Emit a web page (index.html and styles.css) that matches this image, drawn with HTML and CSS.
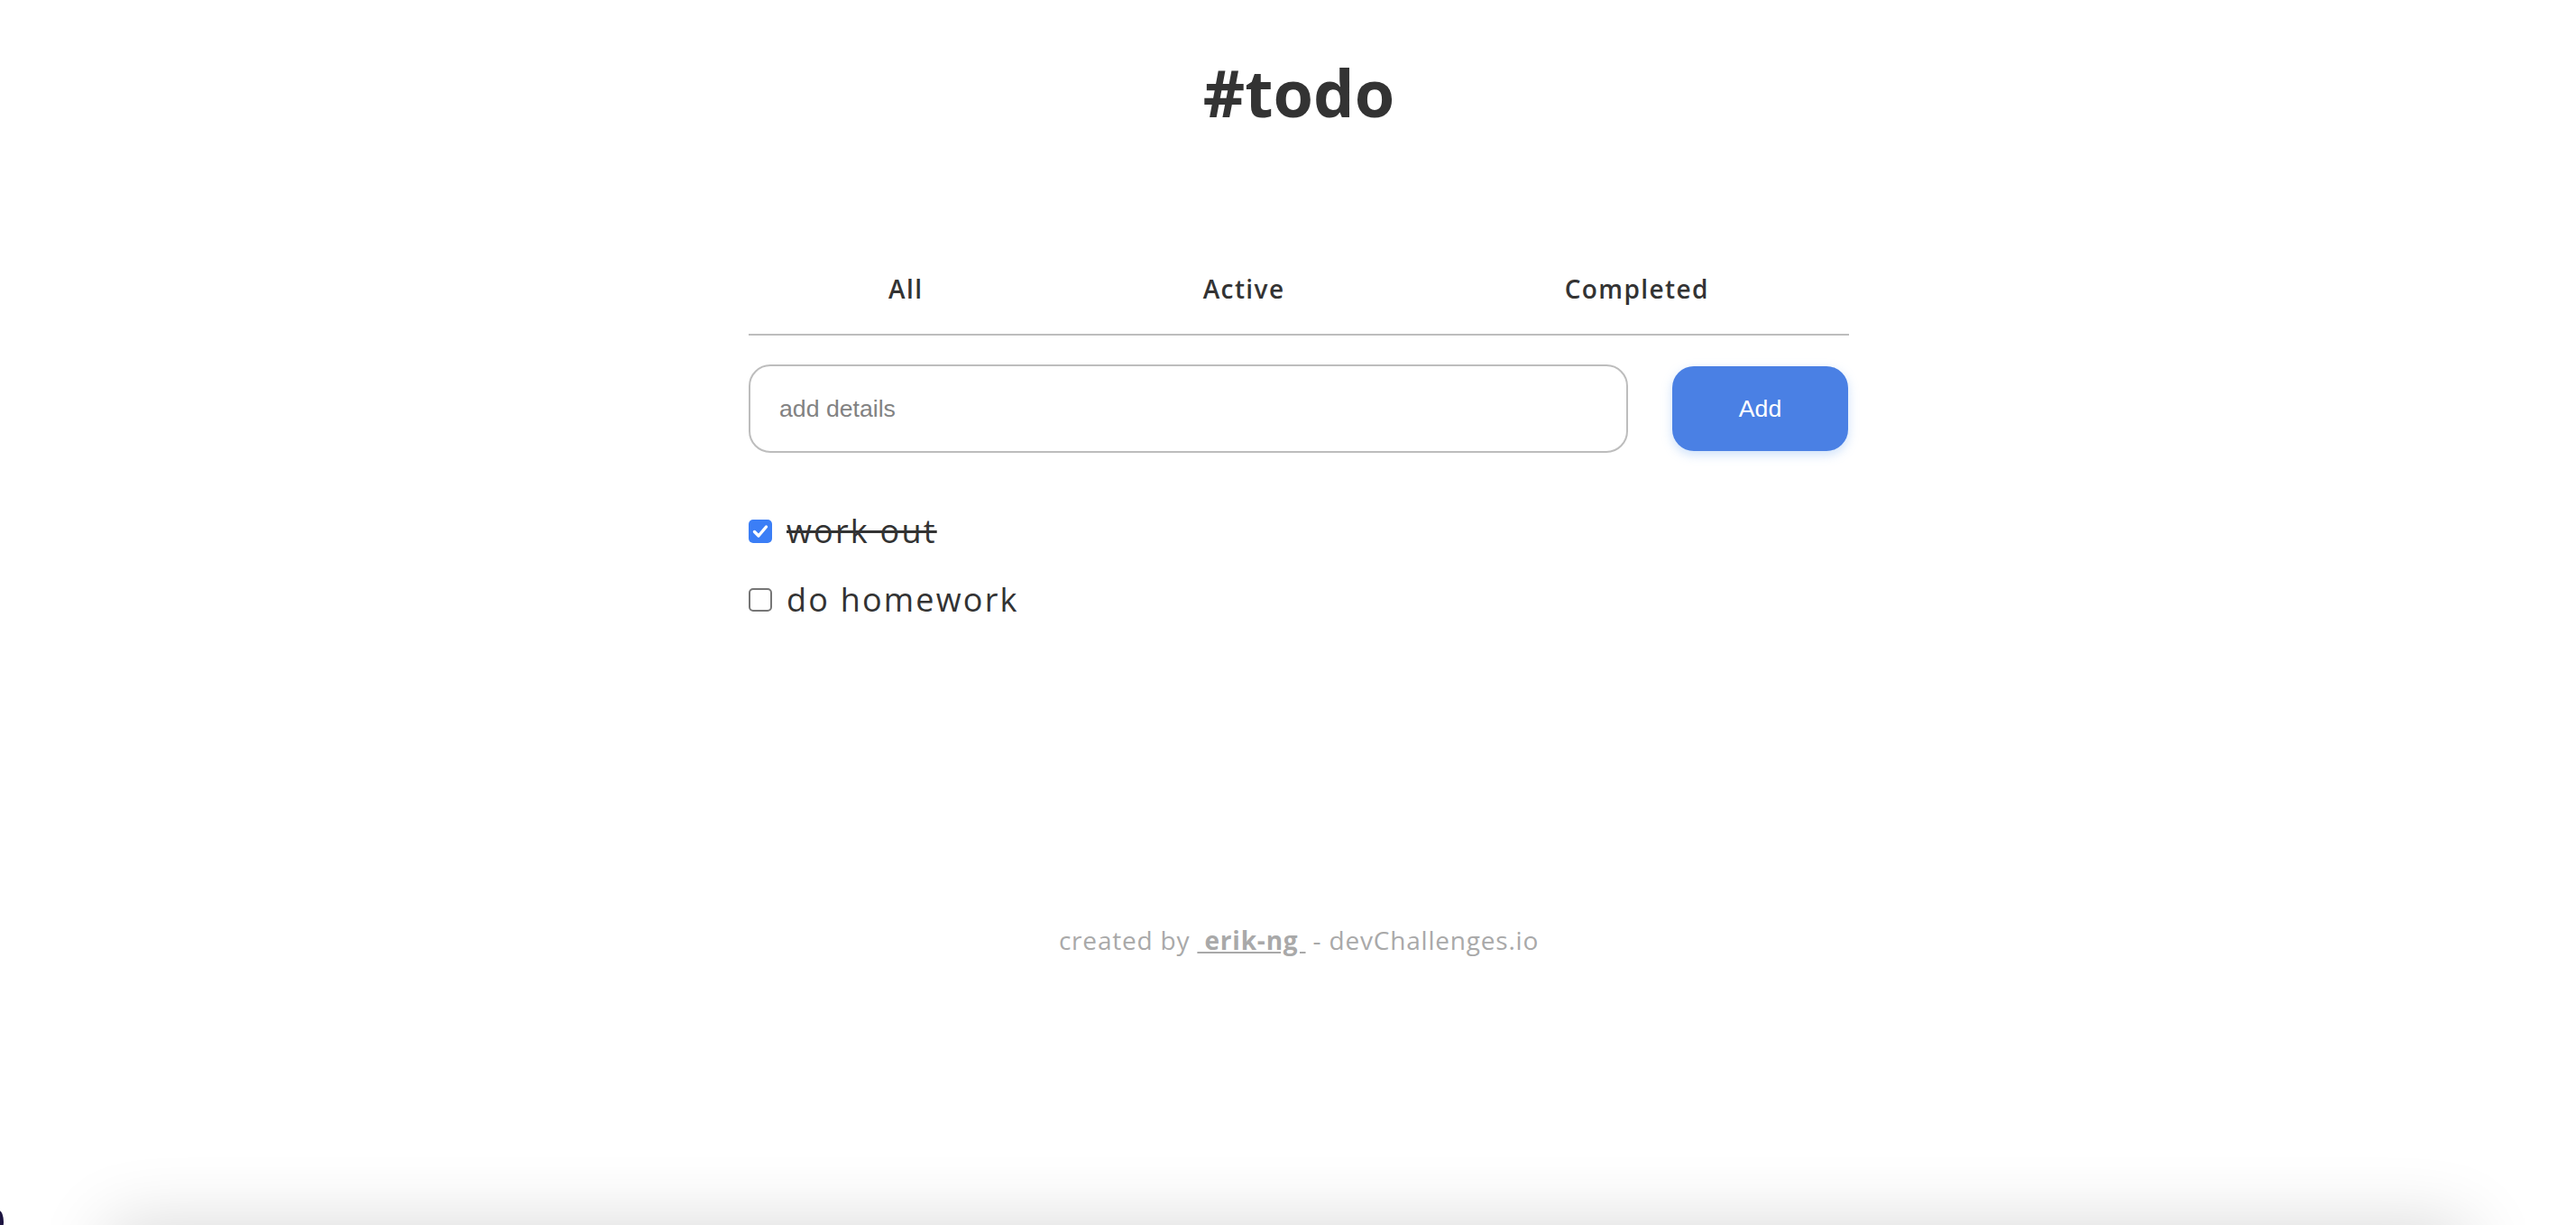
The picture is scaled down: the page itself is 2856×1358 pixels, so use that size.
FILE: index.html
```html
<!DOCTYPE html>
<html lang="en">
<head>
<meta charset="utf-8">
<title>#todo</title>
<link rel="stylesheet" href="styles.css">
</head>
<body>
<div class="page">
  <main class="app">
    <h1 class="title">#todo</h1>
    <nav class="tabs">
      <span class="tab">All</span>
      <span class="tab">Active</span>
      <span class="tab">Completed</span>
    </nav>
    <form class="add-form">
      <input class="add-input" type="text" placeholder="add details">
      <button class="add-btn" type="button">Add</button>
    </form>
    <ul class="todo-list">
      <li class="todo">
        <span class="box box-checked"><svg viewBox="0 0 26 26" width="26" height="26"><path d="M6.5 13.5 L11 18 L19.5 8" fill="none" stroke="#fff" stroke-width="3.4" stroke-linecap="round" stroke-linejoin="round"/></svg></span>
        <span class="todo-text done">work out</span>
      </li>
      <li class="todo">
        <span class="box"></span>
        <span class="todo-text">do homework</span>
      </li>
    </ul>
    <footer class="credit">created by <a class="author" href="#">&nbsp;erik-ng&nbsp;</a> - devChallenges.io</footer>
  </main>
</div>
<div class="bottom-shadow"></div>
<div class="corner"></div>
</body>
</html>
```

FILE: styles.css
```css
html, body {
  margin: 0;
  padding: 0;
  background: #ffffff;
  overflow: hidden;
}

body {
  font-family: "Open Sans", "Noto Sans", sans-serif;
  color: #333333;
  height: 1358px;
}

.page {
  padding-left: 24px;
}

.app {
  width: 1220px;
  margin: 0 auto;
  padding-top: 59px;
  display: flex;
  flex-direction: column;
}

.title {
  margin: 0;
  font-size: 72px;
  line-height: 86px;
  font-weight: 700;
  text-align: center;
  color: #333333;
  letter-spacing: 0;
}

.tabs {
  margin-top: 158px;
  display: flex;
  justify-content: space-around;
  padding-bottom: 33px;
  border-bottom: 2px solid #bdbdbd;
}

.tab {
  font-size: 28px;
  line-height: 34px;
  font-weight: 600;
  color: #333333;
  letter-spacing: 1.4px;
}

.add-form {
  margin: 32px 0 0;
  display: flex;
  align-items: center;
  gap: 49px;
}

.add-input {
  box-sizing: border-box;
  width: 975px;
  height: 98px;
  border: 2px solid #bdbdbd;
  border-radius: 24px;
  padding: 0 32px;
  font-family: "Liberation Sans", Arial, sans-serif;
  font-size: 26.67px;
  color: #333;
  outline: none;
}

.add-input::placeholder {
  color: #828282;
}

.add-btn {
  box-sizing: border-box;
  width: 195px;
  height: 94px;
  border: none;
  border-radius: 24px;
  background: #4a80e4;
  color: #ffffff;
  font-family: "Liberation Sans", Arial, sans-serif;
  font-size: 26.67px;
  box-shadow: 0 4px 12px rgba(127, 177, 243, 0.4);
}

.todo-list {
  list-style: none;
  margin: 61px 0 0;
  padding: 0;
  display: flex;
  flex-direction: column;
  gap: 24px;
}

.todo {
  height: 52px;
  display: flex;
  align-items: center;
  gap: 16px;
}

.box {
  box-sizing: border-box;
  width: 26px;
  height: 26px;
  border: 2px solid #767676;
  border-radius: 5px;
  background: #fff;
  display: flex;
}

.box-checked {
  border: none;
  background: #3b7ef6;
}

.todo-text {
  font-size: 36px;
  font-weight: 500;
  color: #333333;
  line-height: 52px;
  letter-spacing: 2.2px;
}

.done {
  text-decoration: line-through;
  text-decoration-thickness: 3px;
}

.credit {
  margin-top: 331px;
  text-align: center;
  font-size: 28px;
  line-height: 40px;
  font-weight: 500;
  color: #a9a9a9;
  letter-spacing: 0.8px;
}

.author {
  color: #a9a9a9;
  font-weight: 700;
  text-decoration: underline;
}

.bottom-shadow {
  position: fixed;
  left: 140px;
  right: 140px;
  bottom: -140px;
  height: 120px;
  box-shadow: 0 0 80px 20px rgba(0, 0, 0, 0.16);
  background: #dcdcdc;
}

.corner {
  position: fixed;
  left: -6px;
  bottom: -10px;
  width: 10px;
  height: 26px;
  border-radius: 50%;
  background: #1c1440;
}
```
